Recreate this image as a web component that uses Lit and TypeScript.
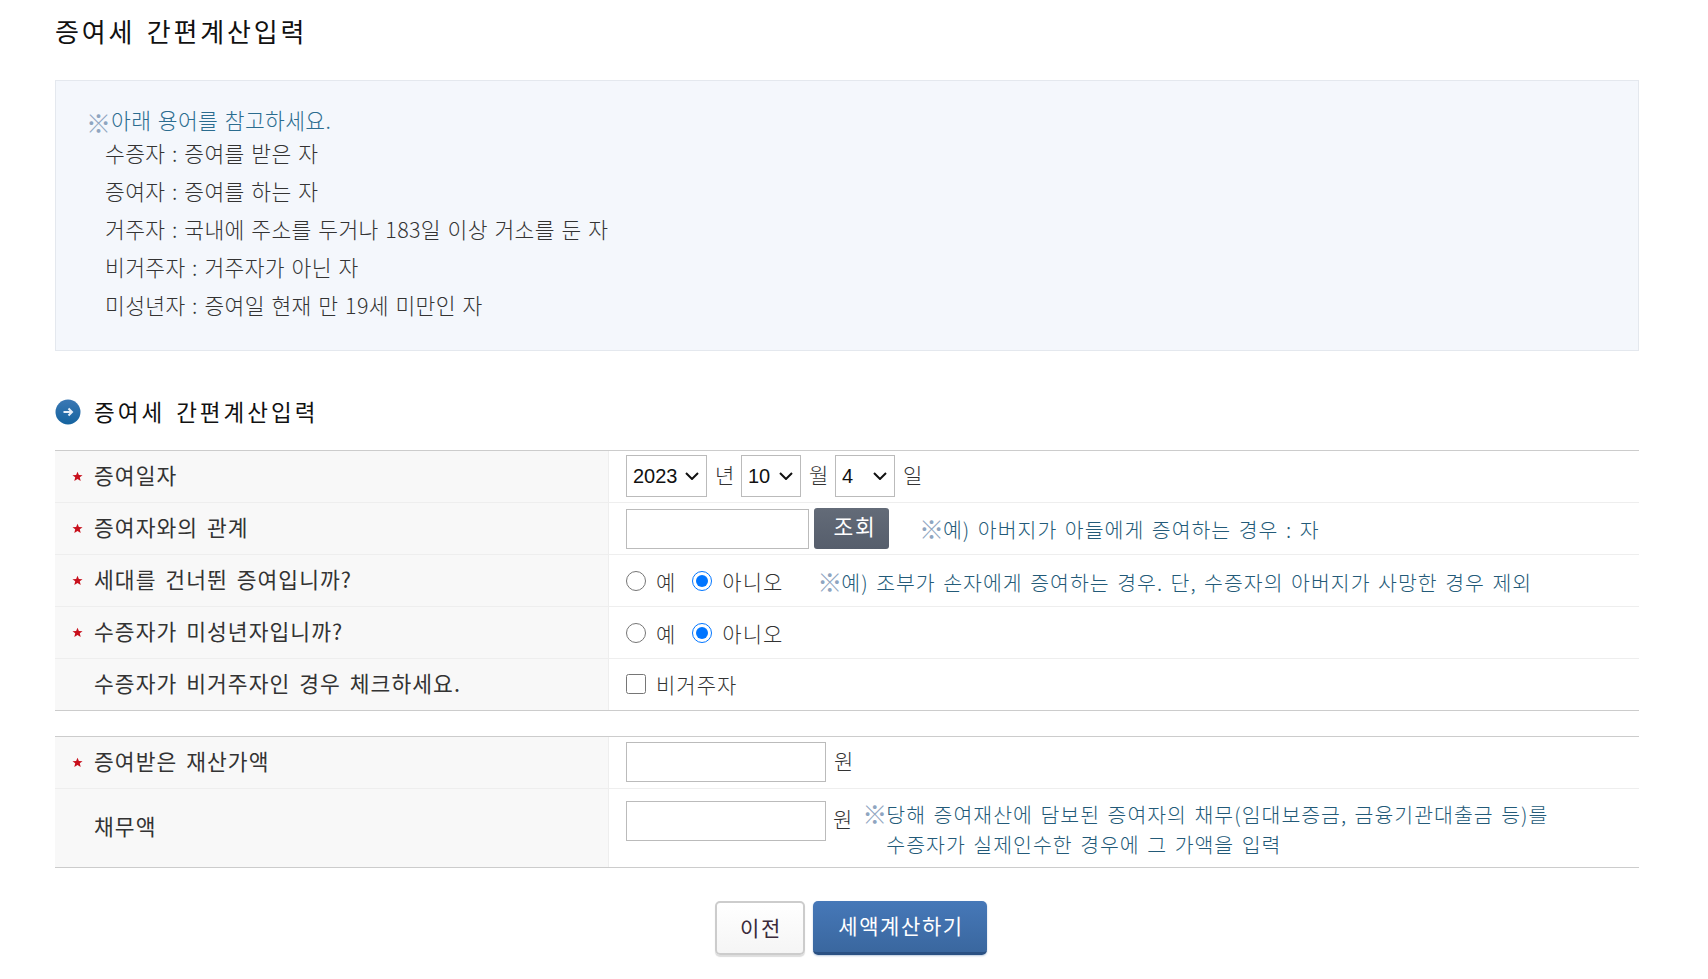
import { LitElement, html, css, svg } from "lit";
import { customElement } from "lit/decorators.js";

const star = svg`<svg class="star" width="11" height="11" viewBox="0 0 12 12"><path d="M6 .8 L7.500 4.300 L11.500 4.600 L8.500 6.900 L9.500 10.800 L6 8.700 L2.500 10.800 L3.500 6.900 L.5 4.600 L4.500 4.300 Z" fill="#c8101c"/></svg>`;

@customElement("app-root")
export class AppRoot extends LitElement {
  static styles = css`
    :host { display:block; font-family:"Noto Sans CJK KR","Noto Sans",sans-serif; color:#333; width:1708px; height:979px; overflow:hidden; background:#fff; }
    .page { padding:12px 69px 0 55px; }
    h1 { margin:0; font-size:26px; font-weight:400; line-height:38px; height:38px; letter-spacing:2.8px; word-spacing:3px; color:#111; }
    .box { margin-top:30px; height:271px; box-sizing:border-box; border:1px solid #e4e8ee; background:#f4f7fc; padding:26px 0 0 30px; font-size:21.5px; font-weight:300; letter-spacing:.35px; word-spacing:1.5px; }
    .box .head { color:#2b6c8f; line-height:26px; height:26px; display:flex; align-items:center; margin-bottom:1px; }
    .box .head span:first-child { width:25px; letter-spacing:0; color:#8fa5c0; font-size:25px; line-height:0; padding-top:4px; }
    .box .item { line-height:38px; height:38px; margin-left:19px; }
    .sec { margin-top:41px; height:38px; display:flex; align-items:center; gap:13px; font-size:22.5px; font-weight:400; letter-spacing:3px; word-spacing:3px; color:#111; }
    .sec svg { margin-top:2px; }
    .table { border-top:1px solid #ccc; border-bottom:1px solid #ccc; margin-top:20px; }
    .table.second { margin-top:25px; }
    .row { display:grid; grid-template-columns:554px 1fr; height:52px; box-sizing:border-box; }
    .row:first-child { height:51px; }
    .row + .row { border-top:1px solid #eee; }
    .row.tall { height:79px; }
    .label { background:#f8f8f8; border-right:1px solid #eee; display:flex; align-items:center; font-size:21.5px; letter-spacing:1.05px; word-spacing:3px; color:#333; font-weight:400; padding-bottom:5px; box-sizing:border-box; }
    .mark { width:39px; flex:none; display:flex; justify-content:flex-end; padding-right:11px; box-sizing:border-box; padding-top:5px; }
    .star { display:block; }
    .val { display:flex; align-items:center; padding-left:17px; font-size:21px; font-weight:300; letter-spacing:1px; color:#333; min-width:0; white-space:nowrap; }
    .val.up { padding-bottom:2px; }
    select { appearance:none; -webkit-appearance:none; font-family:"Liberation Sans",sans-serif; font-size:20px; letter-spacing:0; height:42px; border:1px solid #bbb; border-radius:0; color:#111; padding:0 0 0 6px; margin:0; box-sizing:border-box;
      background:#fff url("data:image/svg+xml,%3Csvg xmlns='http://www.w3.org/2000/svg' width='14' height='8' viewBox='0 0 14 8'%3E%3Cpath d='M1 1l6 6 6-6' fill='none' stroke='%23111' stroke-width='2'/%3E%3C/svg%3E") no-repeat right 7px center; }
    .y { width:81px; } .m { width:60px; } .d { width:60px; }
    .unit { margin:0 8px; width:18px; text-align:center; letter-spacing:0; padding-bottom:4px; }
    input[type=text] { box-sizing:border-box; border:1px solid #bbb; height:40px; margin:0; background:#fff; }
    .w183 { width:183px; } .w200 { width:200px; }
    .btn { font-family:"Noto Sans CJK KR",sans-serif; font-size:21.5px; letter-spacing:1.6px; border:none; background:linear-gradient(#636b78,#565e6c); color:#fff; width:75px; height:41px; margin-left:5px; border-radius:3px; padding:0 0 7px 7px; }
    .hint { color:#235a78; font-size:20.5px; font-weight:300; letter-spacing:1px; word-spacing:2px; }
    .hint i { display:inline-block; width:24px; margin-left:-1px; font-style:normal; color:#8fa5c0; letter-spacing:0; font-size:25px; line-height:0; vertical-align:-1px; }
    input[type=radio], input[type=checkbox] { width:20px; height:20px; margin:0; flex:none; accent-color:#0075ff; }
    .t { margin-left:10px; }
    input[type=radio].gap { margin-left:16px; }
    .rh1 { margin-left:35px; position:relative; top:1px; }
    .tall-val { align-items:flex-start; padding-top:12px; }
    .hint.multi { margin-left:11px; line-height:30px; margin-top:-2px; }
    .indent { display:block; padding-left:23px; }
    .wonl { margin-left:7px; margin-top:2px; letter-spacing:0; }
    .actions { display:flex; justify-content:center; gap:8px; margin-top:33px; padding-left:8px; }
    .b { height:54px; box-sizing:border-box; font-family:"Noto Sans CJK KR",sans-serif; font-size:21px; letter-spacing:1.6px; border-radius:5px; padding:0 0 3px 2px; }
    .prev { width:90px; background:linear-gradient(#fff,#f5f5f5); border:2px solid #ccc; color:#3a2a3a; box-shadow:0 2px 1px #ddd; }
    .calc { width:174px; background:linear-gradient(#4678b8,#3a679f); border:none; color:#fff; border-bottom:3px solid #2b5183; box-shadow:0 1px 2px #b9c9de; }
  `;

  private radios(name: string) {
    return html`<input type="radio" name=${name} /><span class="t">예</span>
      <input class="gap" type="radio" name=${name} checked /><span class="t">아니오</span>`;
  }

  render() {
    return html`<div class="page">
      <h1>증여세 간편계산입력</h1>
      <div class="box">
        <div class="head"><span>※</span><span>아래 용어를 참고하세요.</span></div>
        <div class="item">수증자 : 증여를 받은 자</div>
        <div class="item">증여자 : 증여를 하는 자</div>
        <div class="item">거주자 : 국내에 주소를 두거나 183일 이상 거소를 둔 자</div>
        <div class="item">비거주자 : 거주자가 아닌 자</div>
        <div class="item">미성년자 : 증여일 현재 만 19세 미만인 자</div>
      </div>
      <div class="sec">
        <svg width="26" height="26" viewBox="0 0 26 26">
          <defs><linearGradient id="g" x1="0" y1="0" x2="0" y2="1"><stop offset="0" stop-color="#3b78b4"/><stop offset="1" stop-color="#14639f"/></linearGradient></defs>
          <circle cx="13" cy="13" r="12.5" fill="url(#g)"/>
          <path d="M8.500 13h8.500M13.500 9.500L17 13l-3.500 3.500" fill="none" stroke="#e6eff8" stroke-width="2"/>
        </svg>
        <span>증여세 간편계산입력</span>
      </div>
      <div class="table">
        <div class="row">
          <div class="label"><span class="mark">${star}</span>증여일자</div>
          <div class="val up">
            <select class="y"><option>2023</option></select><span class="unit">년</span>
            <select class="m"><option>10</option></select><span class="unit">월</span>
            <select class="d"><option>4</option></select><span class="unit">일</span>
          </div>
        </div>
        <div class="row">
          <div class="label"><span class="mark">${star}</span>증여자와의 관계</div>
          <div class="val">
            <input class="w183" type="text" /><button class="btn">조회</button>
            <span class="hint" style="margin-left:31px"><i>※</i>예) 아버지가 아들에게 증여하는 경우 : 자</span>
          </div>
        </div>
        <div class="row">
          <div class="label"><span class="mark">${star}</span>세대를 건너뛴 증여입니까?</div>
          <div class="val">${this.radios("a")}
            <span class="hint rh1"><i>※</i>예) 조부가 손자에게 증여하는 경우. 단, 수증자의 아버지가 사망한 경우 제외</span>
          </div>
        </div>
        <div class="row">
          <div class="label"><span class="mark">${star}</span>수증자가 미성년자입니까?</div>
          <div class="val">${this.radios("b")}</div>
        </div>
        <div class="row">
          <div class="label"><span class="mark"></span>수증자가 비거주자인 경우 체크하세요.</div>
          <div class="val up"><input type="checkbox" /><span class="t">비거주자</span></div>
        </div>
      </div>
      <div class="table second">
        <div class="row">
          <div class="label"><span class="mark">${star}</span>증여받은 재산가액</div>
          <div class="val up"><input class="w200" type="text" /><span class="unit">원</span></div>
        </div>
        <div class="row tall">
          <div class="label"><span class="mark"></span>채무액</div>
          <div class="val tall-val">
            <input class="w200" type="text" /><span class="wonl">원</span>
            <span class="hint multi"><i>※</i>당해 증여재산에 담보된 증여자의 채무(임대보증금, 금융기관대출금 등)를<span class="indent">수증자가 실제인수한 경우에 그 가액을 입력</span></span>
          </div>
        </div>
      </div>
      <div class="actions">
        <button class="b prev">이전</button>
        <button class="b calc">세액계산하기</button>
      </div>
    </div>`;
  }
}
